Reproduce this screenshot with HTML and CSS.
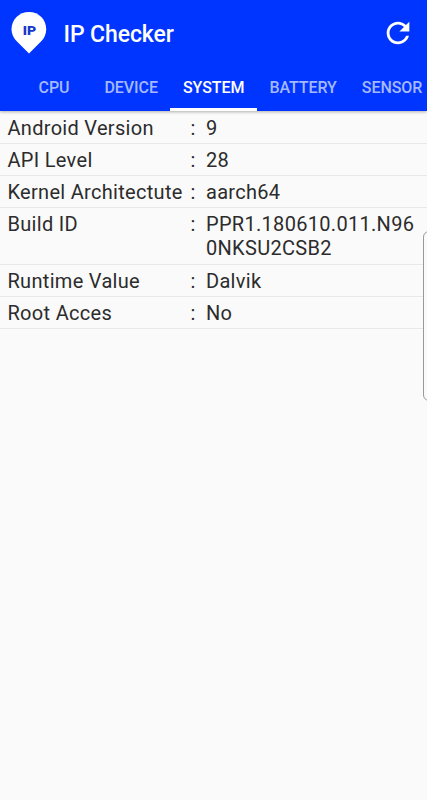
FILE: index.html
```html
<!DOCTYPE html>
<html lang="en">
<head>
  <meta charset="UTF-8">
  <meta name="viewport" content="width=device-width, initial-scale=1">
  <title>IP Checker</title>
  <link rel="stylesheet" href="styles.css">
</head>
<body>
  <header class="app-bar">
    <div class="toolbar">
      <svg class="logo" width="36" height="42" viewBox="0 0 36 42">
        <path fill="#fff" d="M18 0C8 0 .5 7.700.5 17.300c0 5 2.200 9 5.500 12.300L18 41.500l12-11.900c3.300-3.300 5.200-7.300 5.200-12.300C35.200 7.700 28 0 18 0z"/>
        <text class="logo-text" x="11.800" y="22.800" textLength="13.500" lengthAdjust="spacingAndGlyphs">IP</text>
      </svg>
      <h1 class="title">IP Checker</h1>
      <button class="refresh" aria-label="Refresh">
        <svg width="34" height="34" viewBox="0 0 24 24">
          <path fill="#fff" d="M17.650 6.350C16.200 4.900 14.210 4 12 4c-4.420 0-7.990 3.580-7.990 8s3.570 8 7.990 8c3.730 0 6.840-2.550 7.730-6h-2.080c-.82 2.330-3.040 4-5.650 4-3.310 0-6-2.690-6-6s2.690-6 6-6c1.660 0 3.140.69 4.220 1.780L13 11h7V4l-2.350 2.350z"/>
        </svg>
      </button>
    </div>
    <nav class="tabs">
      <span class="tab"><span class="cpu">CPU</span></span>
      <span class="tab">DEVICE</span>
      <span class="tab active">SYSTEM</span>
      <span class="tab">BATTERY</span>
      <span class="tab">SENSOR</span>
    </nav>
  </header>

  <main class="list">
    <div class="row"><span class="label">Android Version</span><span class="colon">:</span><span class="value">9</span></div>
    <div class="row"><span class="label">API Level</span><span class="colon">:</span><span class="value">28</span></div>
    <div class="row"><span class="label">Kernel Architectute</span><span class="colon">:</span><span class="value">aarch64</span></div>
    <div class="row"><span class="label">Build ID</span><span class="colon">:</span><span class="value">PPR1.180610.011.N960NKSU2CSB2</span></div>
    <div class="row"><span class="label">Runtime Value</span><span class="colon">:</span><span class="value">Dalvik</span></div>
    <div class="row"><span class="label">Root Acces</span><span class="colon">:</span><span class="value">No</span></div>
  </main>

  <!-- edge panel handle -->
  <div class="edge-handle"></div>
</body>
</html>
```
FILE: styles.css
```css
* {
  box-sizing: border-box;
}

body {
  margin: 0;
  height: 800px;
  position: relative;
  overflow: hidden;
  background: #fafafa;
  color: #2c2c2c;
  font-family: Roboto, sans-serif;
}

.app-bar {
  height: 111px;
  background: #0035ff;
  box-shadow: 0 1px 3px rgba(0, 0, 0, 0.3);
}

.toolbar {
  display: flex;
  align-items: center;
  height: 66px;
  padding: 0 12px 0 11px;
}

.logo-text {
  font-family: Roboto, sans-serif;
  font-size: 13px;
  font-weight: 900;
  fill: #1638c8;
}

.title {
  margin: 2px 0 0 16.500px;
  color: #fff;
  font-size: 23px;
  font-weight: 500;
  letter-spacing: -0.1px;
}

.refresh {
  display: flex;
  margin-left: auto;
  padding: 0;
  border: none;
  background: none;
}

.tabs {
  display: flex;
  height: 45px;
  padding-left: 16px;
}

.tab {
  flex: none;
  padding: 0 12.500px;
  border-bottom: 3px solid transparent;
  color: #a5b9ff;
  font-size: 16px;
  font-weight: 500;
  line-height: 43px;
  letter-spacing: -0.06px;
}

.cpu {
  padding: 0 10px;
}

.tab.active {
  border-color: #fff;
  color: #fff;
}

.list {
  padding-top: 1px;
}

.row {
  display: flex;
  padding: 4px 8px 3.150px 7.500px;
  border-bottom: 1px solid #e8e8e8;
  font-size: 20px;
  line-height: 24px;
  letter-spacing: 0.3px;
}

.label {
  width: 183px;
  white-space: nowrap;
}

.colon {
  width: 15.500px;
}

.value {
  flex: 1;
  word-break: break-all;
}

.edge-handle {
  position: absolute;
  top: 231px;
  right: -12px;
  width: 16px;
  height: 170px;
  border: 1px solid #999;
  border-radius: 6px;
  background: #fafafa;
}
```
